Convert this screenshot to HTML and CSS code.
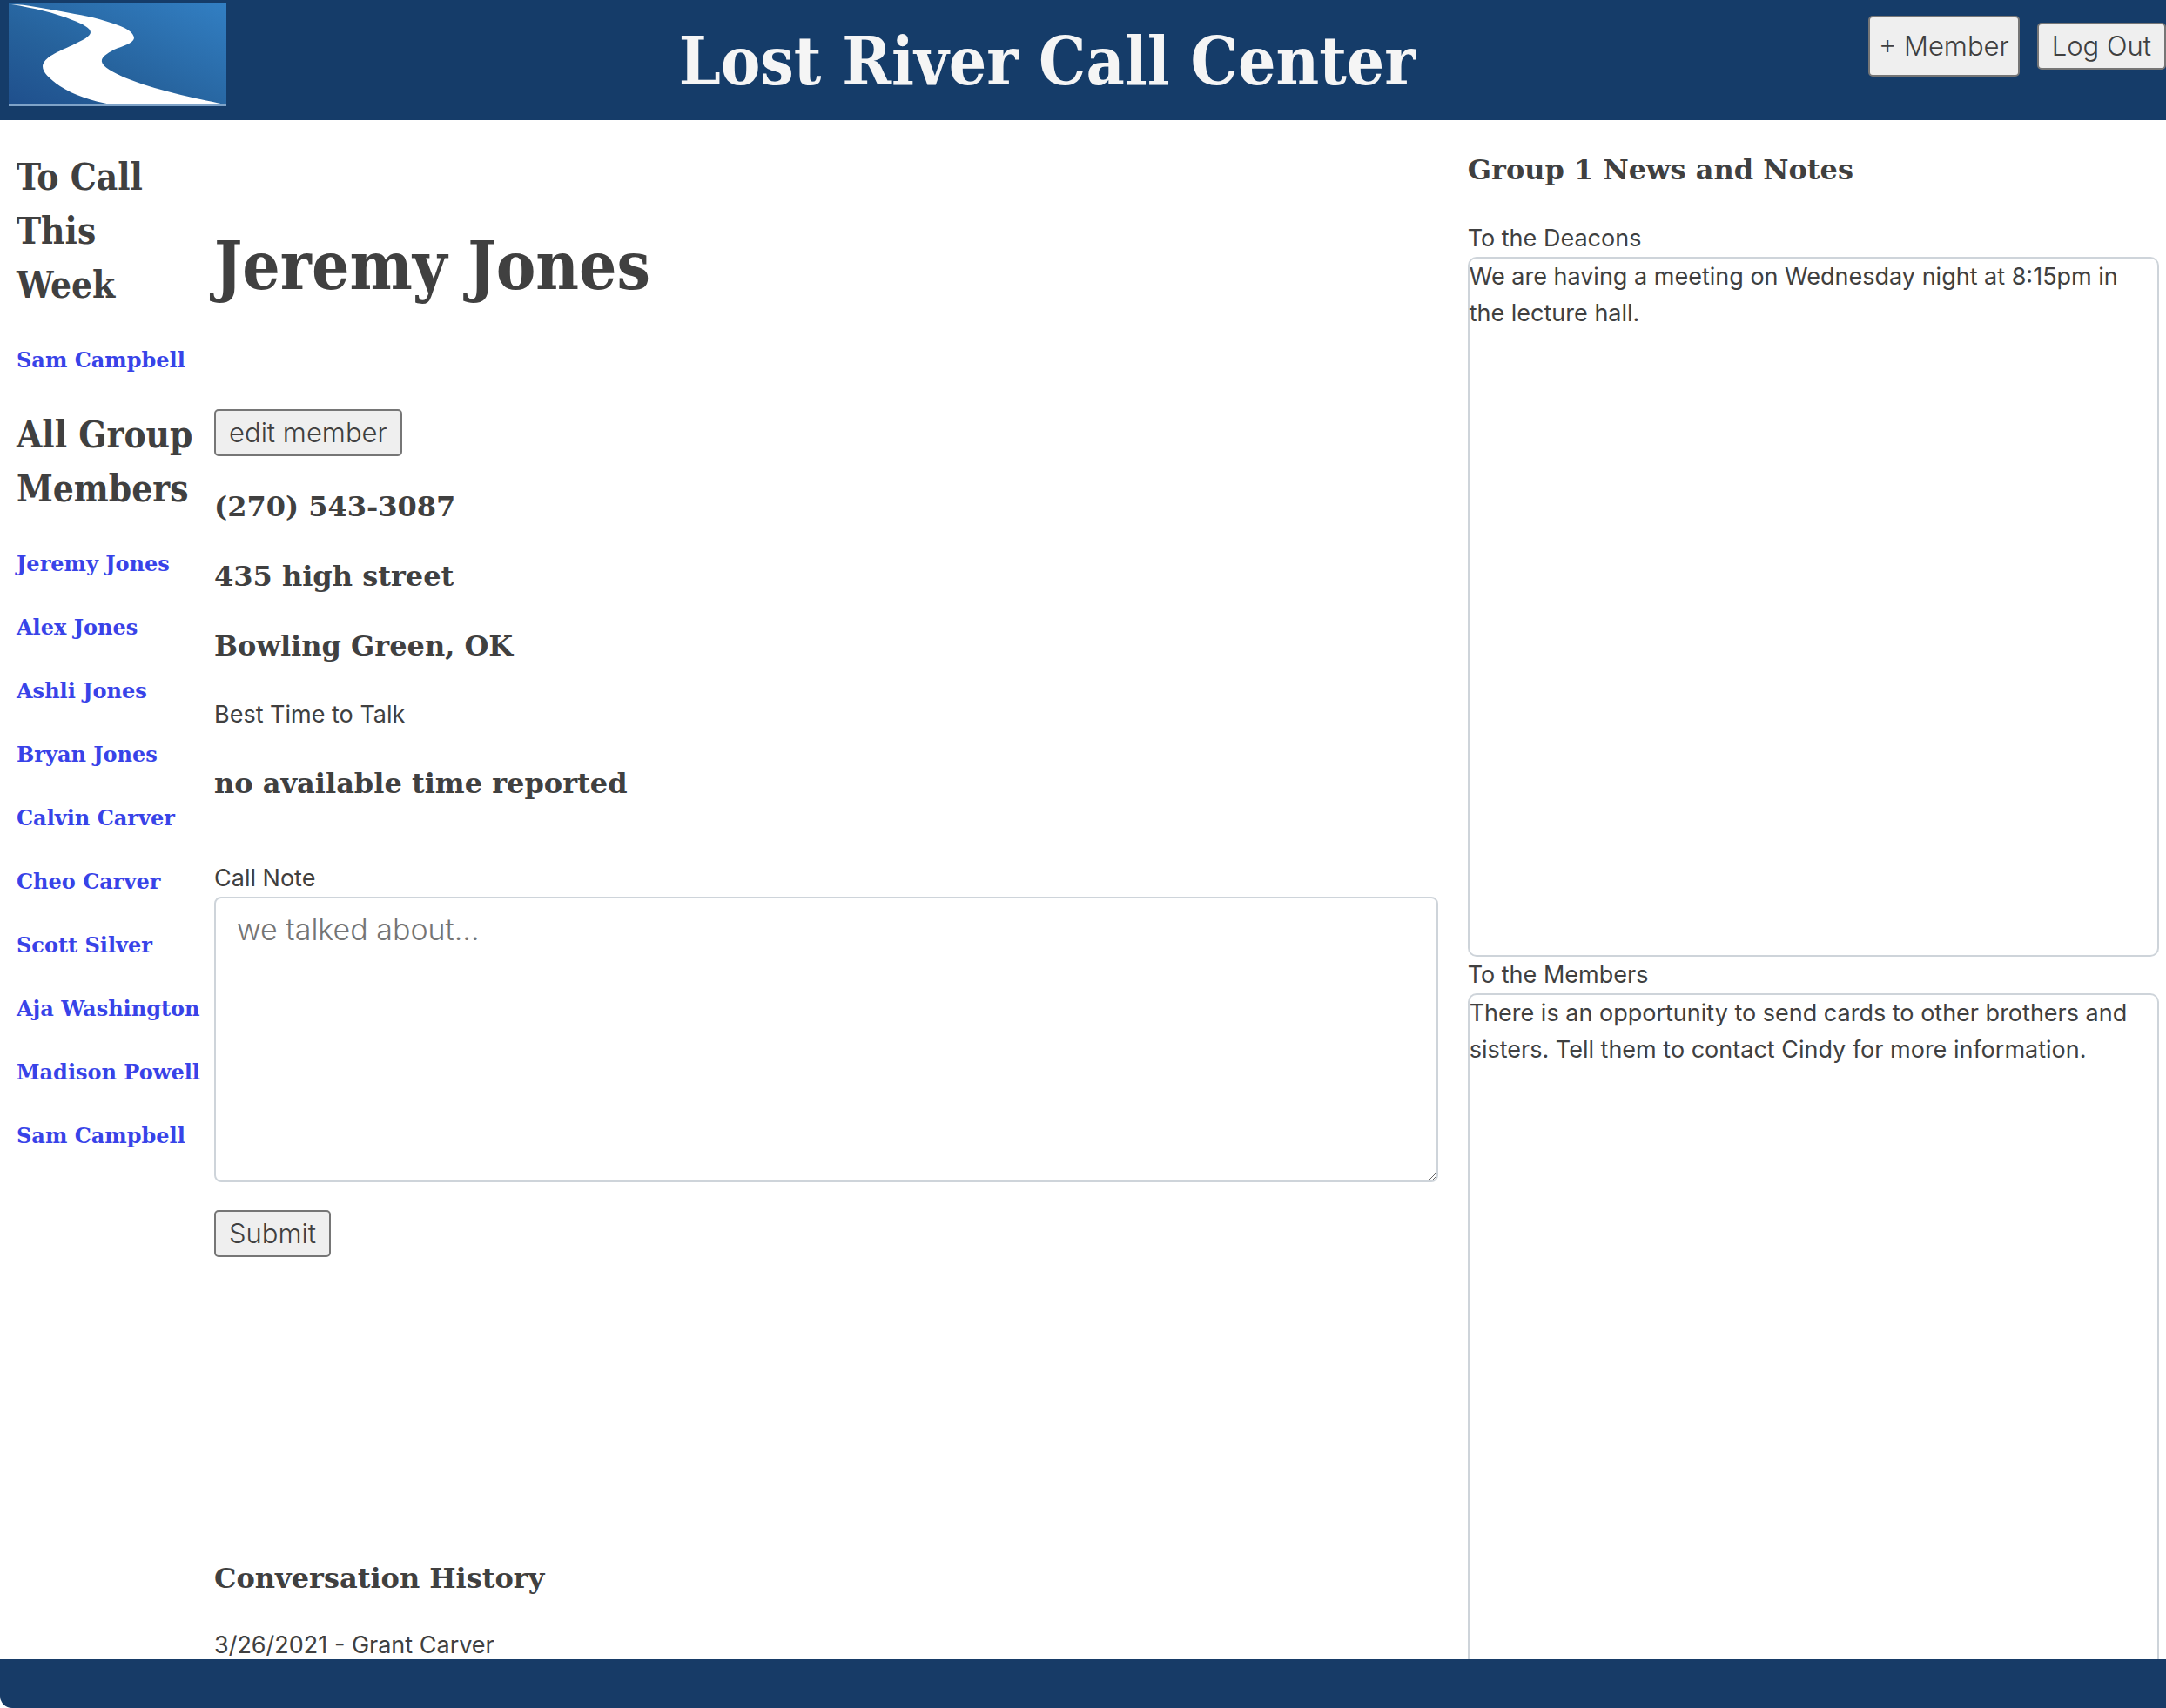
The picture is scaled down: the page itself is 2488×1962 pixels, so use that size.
FILE: index.html
```
<!DOCTYPE html>
<html lang="en">
<head>
<meta charset="utf-8">
<meta name="viewport" content="width=device-width, initial-scale=1">
<title>Lost River Call Center</title>
<link rel="stylesheet" href="styles.css">
</head>
<body>
<header class="site-header">
  <svg class="logo" viewBox="0 0 250 118" role="img" aria-label="Lost River">
    <defs>
      <linearGradient id="sky" x1="0" y1="1" x2="1" y2="0">
        <stop offset="0" stop-color="#1f4f8c"/>
        <stop offset="0.4" stop-color="#26629c"/>
        <stop offset="1" stop-color="#327fc3"/>
      </linearGradient>
    </defs>
    <rect width="250" height="118" fill="url(#sky)"/>
    <path fill="#fff" d="M3 1C20 1 42 6 60 9C82 13 100 16 117 22C134 27 144 33 144 40C143 46 130 49 121 53C112 58 106 62 107 67C108 73 120 79 133 85C150 92 170 98 190 103C212 109 232 112 248 116L117 116C96 112 74 105 59 95C46 86 39 79 39 72C40 62 57 55 73 48C85 42 94 38 94 33C94 28 84 23 73 19C54 11 28 5 3 1Z"/>
    <path stroke="#7fa3c8" stroke-width="2" d="M0 117H250"/>
  </svg>
  <h1 class="site-title">Lost River Call Center</h1>
  <div class="actions">
    <button class="btn btn-tall" type="button">+ Member</button>
    <button class="btn" type="button">Log Out</button>
  </div>
</header>

<main class="columns">
  <nav class="sidebar">
    <h2>To Call This Week</h2>
    <a href="#sam">Sam Campbell</a>
    <h2>All Group Members</h2>
    <a href="#jeremy">Jeremy Jones</a>
    <a href="#alex">Alex Jones</a>
    <a href="#ashli">Ashli Jones</a>
    <a href="#bryan">Bryan Jones</a>
    <a href="#calvin">Calvin Carver</a>
    <a href="#cheo">Cheo Carver</a>
    <a href="#scott">Scott Silver</a>
    <a href="#aja">Aja Washington</a>
    <a href="#madison">Madison Powell</a>
    <a href="#sam">Sam Campbell</a>
  </nav>

  <section class="member">
    <h1 class="member-name">Jeremy Jones</h1>
    <div class="details">
      <button class="btn" type="button">edit member</button>
      <h3>(270) 543-3087</h3>
      <h3>435 high street</h3>
      <h3>Bowling Green, OK</h3>
      <p>Best Time to Talk</p>
      <h3>no available time reported</h3>
    </div>
    <form class="note-form">
      <label for="note">Call Note</label>
      <textarea id="note" class="note" placeholder="we talked about..."></textarea>
      <button class="btn" type="submit">Submit</button>
    </form>
    <section class="history">
      <h3>Conversation History</h3>
      <p>3/26/2021 - Grant Carver</p>
    </section>
  </section>

  <aside class="news">
    <h3>Group 1 News and Notes</h3>
    <p>To the Deacons</p>
    <div class="news-box">We are having a meeting on Wednesday night at 8:15pm in the lecture hall.</div>
    <p>To the Members</p>
    <div class="news-box">There is an opportunity to send cards to other brothers and sisters. Tell them to contact Cindy for more information.</div>
  </aside>
</main>

<footer class="site-footer"></footer>
</body>
</html>
```
FILE: styles.css
```
* {
  box-sizing: border-box;
}

body {
  margin: 0;
  height: 100vh;
  display: flex;
  flex-direction: column;
  background: #fff;
  color: #404040;
  font: 27px/42px Inter, sans-serif;
}

h1, h2, h3, p {
  margin: 0;
}

h1, h2 {
  font-family: "DejaVu Serif Condensed", "DejaVu Serif", serif;
  font-weight: bold;
}

h3, .sidebar a {
  font-family: "DejaVu Serif", serif;
  font-weight: bold;
}

h1 {
  font-size: 76px;
  line-height: 108px;
}

h2 {
  font-size: 42px;
  line-height: 62px;
}

h3 {
  font-size: 32px;
  line-height: 44px;
}

/* Header */

.site-header {
  flex: none;
  display: grid;
  grid-template-columns: auto 1fr auto;
  align-items: start;
  height: 138px;
  padding: 4px 0 0 10px;
  background: #153c69;
}

.logo {
  display: block;
  width: 250px;
  height: 118px;
}

.site-title {
  align-self: center;
  color: #f5f5f5;
  text-align: center;
}

.actions {
  display: flex;
  align-items: center;
  gap: 20px;
  padding-top: 14px;
}

.btn {
  height: 54px;
  padding: 0 15px;
  border: 2px solid #767676;
  border-radius: 5px;
  background: #efefef;
  color: #404040;
  font: 300 31px/40px Inter, sans-serif;
}

.btn-tall {
  height: 70px;
  padding: 0 10px;
}

/* Columns */

.columns {
  flex: 1;
  min-height: 0;
  overflow: hidden;
  display: grid;
  grid-template-columns: 227px minmax(0, 29fr) minmax(0, 16fr);
  align-items: start;
  padding: 0 8px 0 19px;
}

.sidebar {
  display: flex;
  flex-direction: column;
  gap: 37px;
  padding-top: 35px;
}

.sidebar h2 {
  max-width: 212px;
}

.sidebar a {
  color: #3843e8;
  font-size: 24px;
  line-height: 36px;
  text-decoration: none;
  white-space: nowrap;
}

.member {
  margin-right: 34px;
  padding-top: 114px;
}

.member-name {
  margin-bottom: 110px;
}

.details {
  display: flex;
  flex-direction: column;
  align-items: flex-start;
  gap: 36px;
}

.note-form {
  display: flex;
  flex-direction: column;
  align-items: flex-start;
  margin-top: 66px;
}

.note {
  display: block;
  width: 100%;
  height: 328px;
  margin-bottom: 32px;
  padding: 12px 24px;
  border: 2px solid #ced4da;
  border-radius: 8px;
  color: #404040;
  font: 300 34px/48px Inter, sans-serif;
  resize: both;
}

.note::placeholder {
  color: #757575;
}

.history {
  display: flex;
  flex-direction: column;
  gap: 34px;
  margin-top: 347px;
}

.news {
  padding-top: 35px;
}

.news h3 {
  margin-bottom: 36px;
}

.news-box {
  height: 804px;
  border: 2px solid #ced4da;
  border-radius: 10px;
}

/* Footer */

.site-footer {
  flex: none;
  height: 56px;
  border-bottom-left-radius: 14px;
  background: #173b67;
}
```
